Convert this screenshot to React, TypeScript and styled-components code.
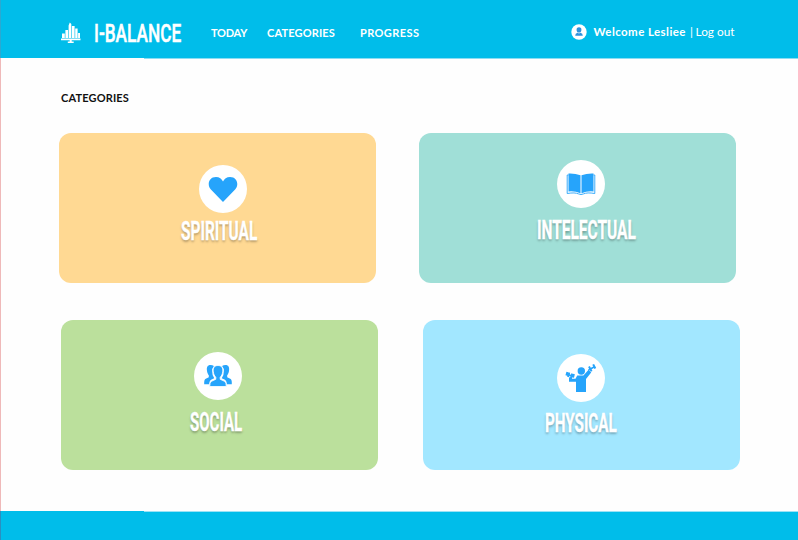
import React from "react";
import styled, { createGlobalStyle } from "styled-components";

const BLUE = "#00bdea";
const ICON = "#26a4fb";

const GlobalStyle = createGlobalStyle`
  * { box-sizing: border-box; }
  body { margin: 0; background: #fff; font-family: Lato, sans-serif; overflow: hidden; }
`;

const Page = styled.div`
  display: flex;
  flex-direction: column;
  height: 540px;
  border-left: 1px solid #efb9b9;
  background: #fefefe;
`;

const Header = styled.header`
  position: relative;
  display: flex;
  align-items: flex-start;
  height: 58px;
  margin-left: -1px;
  padding-left: 60px;
  flex: none;
  color: #fff;
  background: ${BLUE};
  border-left: 1px solid #2aa9d2;
  &::after {
    content: "";
    position: absolute;
    left: 143px;
    right: 0;
    top: 100%;
    height: 1px;
    background: #8bddf3;
  }
`;

const Logo = styled.svg`
  display: block;
  width: 20px;
  height: 24px;
  margin-top: 21px;
`;

const Fit = styled.span<{ $w: number }>`
  display: inline-block;
  flex: none;
  width: ${(p) => p.$w}px;
  white-space: nowrap;
`;

const Squeeze = styled.span<{ $x: number }>`
  display: inline-block;
  transform: scaleX(${(p) => p.$x});
  transform-origin: 0 50%;
`;

const Brand = styled(Fit)`
  margin: 17px 0 0 13px;
  font: 500 26.5px/32px Roboto, sans-serif;
  -webkit-text-stroke: 0.5px #fff;
`;

const Nav = styled.nav`
  display: flex;
  margin: 25px 0 0 29px;
`;

const NavItem = styled(Fit)<{ $gap?: number; $track: number }>`
  margin-right: ${(p) => p.$gap ?? 0}px;
  font-size: 11px;
  line-height: 15px;
  font-weight: 700;
  letter-spacing: ${(p) => p.$track}px;
`;

const Account = styled.div`
  display: flex;
  align-items: center;
  height: 16px;
  margin: 24px 0 0 151.5px;
  font-size: 11.8px;
  line-height: 16px;
`;

const Avatar = styled.svg`
  width: 16px;
  height: 16px;
  margin-right: 7px;
  flex: none;
`;

const Welcome = styled(Fit)`
  font-size: 11.5px;
  font-weight: 700;
  letter-spacing: 0.43px;
`;

const Main = styled.main`
  flex: none;
  height: 453px;
  padding-top: 32px;
`;

const Title = styled.h1`
  margin: 0 0 28px 60px;
  height: 15px;
  color: #111;
  font-size: 11px;
  line-height: 15px;
  font-weight: 700;
  letter-spacing: 0.15px;
`;

const Row = styled.div<{ $left: number; $gap: number }>`
  display: flex;
  gap: ${(p) => p.$gap}px;
  padding-left: ${(p) => p.$left}px;
  margin-bottom: 37px;
`;

const Card = styled.section<{ $color: string; $top: number }>`
  display: flex;
  flex-direction: column;
  align-items: flex-start;
  width: 317px;
  height: 150px;
  flex: none;
  padding-top: ${(p) => p.$top}px;
  border-radius: 12px;
  background: ${(p) => p.$color};
`;

const Circle = styled.div<{ $left: number }>`
  display: grid;
  place-items: center;
  width: 48px;
  height: 48px;
  margin-left: ${(p) => p.$left}px;
  border-radius: 50%;
  background: #fff;
`;

const Icon = styled.svg`
  display: block;
  width: 32px;
  height: 32px;
  fill: ${ICON};
`;

const Label = styled(Fit)<{ $left: number; $gap: number }>`
  margin: ${(p) => p.$gap}px 0 0 ${(p) => p.$left}px;
  height: 30px;
  color: #fff;
  font: 700 25.5px/30px Roboto, sans-serif;
  -webkit-text-stroke: 0.4px #fff;
  text-shadow: 0 2px 3px rgba(0, 0, 0, 0.28);
`;

const Footer = styled.footer`
  position: relative;
  height: 29px;
  margin-left: -1px;
  background: ${BLUE};
  border-left: 1px solid #2a8fc0;
  &::before {
    content: "";
    position: absolute;
    left: 143px;
    right: 0;
    top: 0;
    height: 1px;
    background: #9be2f5;
  }
`;

const Heart = () => (
  <Icon viewBox="0 0 32 32">
    <path d="M16 29 3.9 16.6C-.2 12.2 1.5 4 9 4c3.400 0 5.700 1.800 7 4.500C17.300 5.800 19.600 4 23 4c7.500 0 9.200 8.200 5.100 12.600Z" />
  </Icon>
);

const Book = () => (
  <Icon viewBox="0 0 32 32">
    <path d="M3.500 5.500Q10 5.200 15.500 7.200V25.200Q10 22.800 3.500 23.400Z M28.500 5.500Q22 5.200 16.500 7.200V25.200Q22 22.800 28.500 23.400Z" />
    <path d="M3.500 7H2.200V25.500Q10 24.200 13.500 25.900Q16 27.200 18.500 25.900Q22 24.200 29.800 25.500V7H28.500" fill="none" stroke={ICON} strokeWidth="0.9" />
  </Icon>
);

const People = () => (
  <Icon viewBox="0 0 32 32">
    <path d="M8.500 5C5.500 5 4.600 7.100 4.900 10.200C5.100 12.700 6 14.200 6.800 15.200V17.200L3.300 19Q2 20 2.200 24.200H7.200Q7.300 20.500 9.500 19.500L12.300 18.200Q10 15.300 10.200 11.500Q9.700 8.500 11.900 6Q10.600 5 8.500 5Z M23.500 5C26.500 5 27.400 7.100 27.100 10.200C26.900 12.700 26 14.200 25.200 15.200V17.200L28.700 19Q30 20 29.800 24.200H24.800Q24.700 20.500 22.500 19.500L19.700 18.200Q22 15.300 21.800 11.500Q22.300 8.500 20.100 6Q21.400 5 23.500 5Z" />
    <path d="M16 5.500C12.100 5.500 10.900 8.300 11.300 11.600C11.500 14 12.500 16 13.800 17.200V19.300L9.500 21.300Q7.600 22.300 7.700 26.500H24.300Q24.400 22.300 22.500 21.300L18.200 19.300V17.200C19.500 16 20.500 14 20.700 11.600C21.100 8.300 19.900 5.500 16 5.500Z" stroke="#fff" strokeWidth="0.8" />
  </Icon>
);

const Exercise = () => (
  <Icon viewBox="0 0 32 32">
    <circle cx="16.300" cy="9" r="3.700" />
    <path d="M4 15.500V19.700H11V30H21V17L26.200 10.400L23.600 7.800L18.400 13.600H12.200L10.500 16.700H7V14.800Z" />
    <path d="M1.500 12 8.500 14.400M23.500 8 30 4.500" fill="none" stroke={ICON} strokeWidth="1.600" />
    <path d="M2.400 10 1.400 13.600M4.200 10.600 3.100 15M7.300 11.600 5.900 16M8.900 12 8 15.400M24 4.500 26.600 9.400M28.200 2.400 30.300 6.500" fill="none" stroke={ICON} strokeWidth="2" />
  </Icon>
);

const cards = [
  { name: "SPIRITUAL", color: "#ffd993", icon: <Heart />, top: 32, left: 139.500, gap: 3, label: 122, w: 77, x: 0.604 },
  { name: "INTELECTUAL", color: "#a0dfd7", icon: <Book />, top: 27, left: 137.500, gap: 7, label: 118, w: 99, x: 0.606 },
  { name: "SOCIAL", color: "#bbe09c", icon: <People />, top: 32, left: 133, gap: 7, label: 129, w: 53, x: 0.588 },
  { name: "PHYSICAL", color: "#a2e7ff", icon: <Exercise />, top: 34, left: 134.500, gap: 6, label: 122, w: 73, x: 0.595 },
];

const CategoryCard = ({ item }: { item: (typeof cards)[number] }) => (
  <Card $color={item.color} $top={item.top}>
    <Circle $left={item.left}>{item.icon}</Circle>
    <Label $left={item.label} $gap={item.gap} $w={item.w}>
      <Squeeze $x={item.x}>{item.name}</Squeeze>
    </Label>
  </Card>
);

export default function App() {
  return (
    <>
      <GlobalStyle />
      <Page>
        <Header>
          <Logo viewBox="0 0 20 24" fill="#fff">
            <path d="M1 12.500h2.800v4.500H1zM4.400 9h2.600v8H4.400zM7.600 4.500 8.800 1.500 10.300 3v14H7.600zM10.900 5h2.700v12h-2.700zM14.200 7.500h2.400V17h-2.400zM17.100 12h1.900v5h-1.900zM0 17.500h19.500v1.700H0zM8.700 19h2v1.500h2v1.500H6.800V20.500h1.900z" />
          </Logo>
          <Brand $w={88}>
            <Squeeze $x={0.65}>I-BALANCE</Squeeze>
          </Brand>
          <Nav>
            <NavItem $w={36} $gap={20} $track={-0.25}>TODAY</NavItem>
            <NavItem $w={68} $gap={25} $track={0.15}>CATEGORIES</NavItem>
            <NavItem $w={59} $track={0.4}>PROGRESS</NavItem>
          </Nav>
          <Account>
            <Avatar viewBox="0 0 16 16">
              <circle cx="8" cy="8" r="7.700" fill="#fff" />
              <path d="M8 3.300a2.400 2.400 0 0 1 2.400 2.600C10.400 7.500 9.500 8.500 8 8.500S5.600 7.500 5.600 5.900A2.400 2.400 0 0 1 8 3.300ZM4.200 11.800Q4.200 9.300 6.500 8.700L8 9.500 9.500 8.700Q11.800 9.300 11.800 11.800Z" fill="#2e92dc" />
            </Avatar>
            <Welcome $w={96.5}>Welcome Lesliee</Welcome>
            <Fit $w={5.5}>|</Fit>
            <Fit $w={41}>Log out</Fit>
          </Account>
        </Header>
        <Main>
          <Title>CATEGORIES</Title>
          <Row $left={58} $gap={43}>
            {cards.slice(0, 2).map((c) => <CategoryCard key={c.name} item={c} />)}
          </Row>
          <Row $left={59.500} $gap={45}>
            {cards.slice(2).map((c) => <CategoryCard key={c.name} item={c} />)}
          </Row>
        </Main>
        <Footer />
      </Page>
    </>
  );
}
